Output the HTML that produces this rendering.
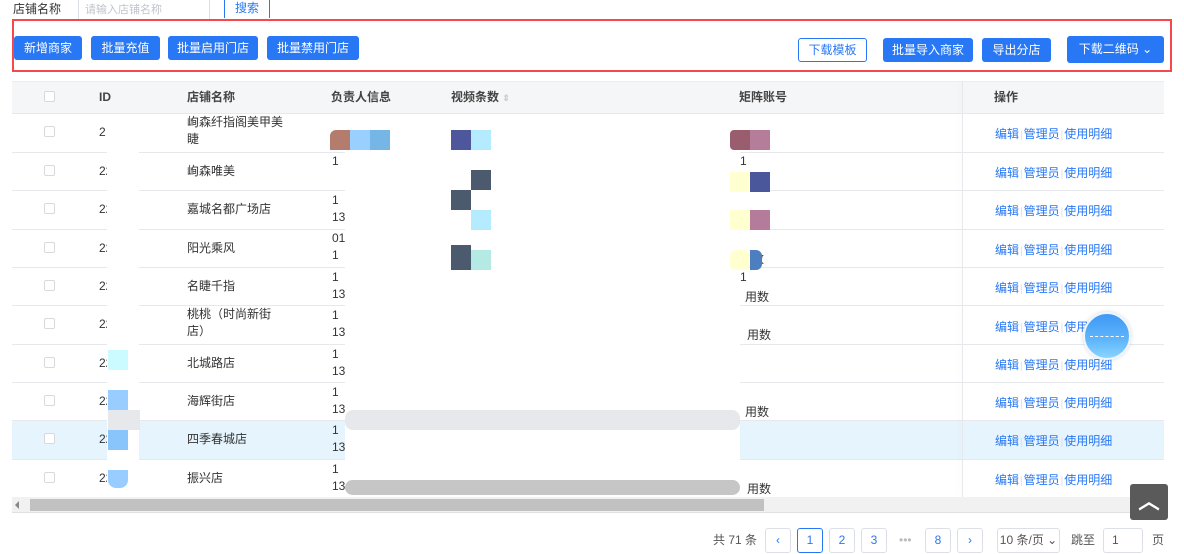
<!DOCTYPE html>
<html><head><meta charset="utf-8"><style>
*{margin:0;padding:0;box-sizing:border-box}
body{width:1184px;height:554px;background:#fff;position:relative;overflow:hidden;font-family:"Liberation Sans","Noto Sans CJK SC",sans-serif;font-size:12px;color:#333}
.a{position:absolute}
.btn{position:absolute;height:24px;line-height:24px;background:#2878f5;color:#fff;border-radius:3px;text-align:center;font-size:12px}
.cb{position:absolute;left:44px;width:11px;height:11px;border:1px solid #d9d9d9;border-radius:2px;background:#fff}
.hl{position:absolute;left:12px;width:1152px;height:1px;background:#e6e8eb}
.t{position:absolute;font-size:12px;color:#333;line-height:20px}
.op{position:absolute;left:995px;color:#2878f5;font-size:12px;white-space:nowrap}
.op i{color:#ddd;font-style:normal;margin:0 1px;font-size:10px}
.pg{position:absolute;top:528px;height:25px;border:1px solid #dcdfe6;border-radius:3px;text-align:center;line-height:23px;color:#2878f5;font-size:12px;background:#fff}
.sw{position:absolute;background:#fff}
</style></head><body>
<div class="t" style="left:13px;top:-1px;color:#333">店铺名称</div>
<div class="a" style="left:78px;top:-2px;width:132px;height:22px;border:1px solid #dcdfe6;border-top:none;color:#c0c4cc;font-size:11px;padding:3px 6px">请输入店铺名称</div>
<div class="a" style="left:224px;top:-2px;width:46px;height:20px;border-left:1px solid #2878f5;border-right:1px solid #2878f5;color:#2878f5;text-align:center;line-height:20px">搜索</div>
<div class="a" style="left:12px;top:19px;width:1160px;height:53px;border:2px solid #f5484c"></div>
<div class="a" style="left:14px;top:44px;width:4px;height:4px;background:#f5484c"></div>
<div class="btn" style="left:14px;top:36px;width:68px">新增商家</div>
<div class="btn" style="left:91px;top:36px;width:69px">批量充值</div>
<div class="btn" style="left:168px;top:36px;width:90px">批量启用门店</div>
<div class="btn" style="left:267px;top:36px;width:92px">批量禁用门店</div>
<div class="btn" style="left:798px;top:38px;width:69px;background:#fff;color:#2878f5;border:1px solid #2878f5;line-height:22px">下载模板</div>
<div class="btn" style="left:883px;top:38px;width:90px">批量导入商家</div>
<div class="btn" style="left:982px;top:38px;width:69px">导出分店</div>
<div class="btn" style="left:1067px;top:36px;width:97px;height:27px;line-height:27px">下载二维码 ⌄</div>

<div class="a" style="left:12px;top:81px;width:1152px;height:32px;background:#f5f6f7;border-top:1px solid #ebedf0"></div>
<div class="cb" style="top:91px"></div>
<div class="t" style="left:99px;top:87px;font-weight:bold;color:#444">ID</div>
<div class="t" style="left:187px;top:87px;font-weight:bold;color:#444">店铺名称</div>
<div class="t" style="left:331px;top:87px;font-weight:bold;color:#444">负责人信息</div>
<div class="t" style="left:451px;top:87px;font-weight:bold;color:#444">视频条数 <span style="color:#ccc;font-size:9px">⇕</span></div>
<div class="t" style="left:739px;top:87px;font-weight:bold;color:#444">矩阵账号</div>
<div class="t" style="left:994px;top:87px;font-weight:bold;color:#444">操作</div>

<div class="a" style="left:12px;top:420px;width:1152px;height:39px;background:#e6f4fd"></div>
<div class="hl" style="top:113px"></div><div class="hl" style="top:152px"></div><div class="hl" style="top:190px"></div><div class="hl" style="top:229px"></div><div class="hl" style="top:267px"></div><div class="hl" style="top:305px"></div><div class="hl" style="top:344px"></div><div class="hl" style="top:382px"></div><div class="hl" style="top:420px"></div><div class="hl" style="top:459px"></div><div class="hl" style="top:497px"></div>

<div class="cb" style="top:126px"></div><div class="cb" style="top:165px"></div><div class="cb" style="top:203px"></div><div class="cb" style="top:242px"></div><div class="cb" style="top:280px"></div><div class="cb" style="top:318px"></div><div class="cb" style="top:357px"></div><div class="cb" style="top:395px"></div><div class="cb" style="top:433px"></div><div class="cb" style="top:472px"></div>

<div class="t" style="left:99px;top:122px">2</div>
<div class="t" style="left:99px;top:161px">22</div><div class="t" style="left:99px;top:199px">22</div><div class="t" style="left:99px;top:238px">22</div><div class="t" style="left:99px;top:276px">22</div><div class="t" style="left:99px;top:314px">22</div><div class="t" style="left:99px;top:353px">22</div><div class="t" style="left:99px;top:391px">22</div><div class="t" style="left:99px;top:429px">22</div><div class="t" style="left:99px;top:468px">22</div>

<div class="t" style="left:187px;top:114px;line-height:17px">峋森纤指阁美甲美<br>睫</div>
<div class="t" style="left:187px;top:161px">峋森唯美</div>
<div class="t" style="left:187px;top:199px">嘉城名都广场店</div>
<div class="t" style="left:187px;top:238px">阳光乘风</div>
<div class="t" style="left:187px;top:276px">名睫千指</div>
<div class="t" style="left:187px;top:306px;line-height:17px">桃桃（时尚新街<br>店）</div>
<div class="t" style="left:187px;top:353px">北城路店</div>
<div class="t" style="left:187px;top:391px">海辉街店</div>
<div class="t" style="left:187px;top:429px">四季春城店</div>
<div class="t" style="left:187px;top:468px">振兴店</div>

<div class="t" style="left:332px;top:153px;line-height:17px">1</div>
<div class="t" style="left:332px;top:192px;line-height:17px">1<br>13</div>
<div class="t" style="left:332px;top:230px;line-height:17px">01<br>1</div>
<div class="t" style="left:332px;top:269px;line-height:17px">1<br>131</div>
<div class="t" style="left:332px;top:307px;line-height:17px">1<br>131</div>
<div class="t" style="left:332px;top:346px;line-height:17px">1<br>13167</div>
<div class="t" style="left:332px;top:384px;line-height:17px">1<br>1316</div>
<div class="t" style="left:332px;top:422px;line-height:17px">1<br>1316</div>
<div class="t" style="left:332px;top:461px;line-height:17px">1<br>131</div>
<div class="t" style="left:451px;top:153px;line-height:17px">65</div>
<div class="t" style="left:451px;top:230px;line-height:17px">64</div>
<div class="t" style="left:451px;top:384px;line-height:17px">8</div>
<div class="t" style="left:451px;top:461px;line-height:17px">160</div>
<div class="t" style="left:740px;top:153px;line-height:17px">1</div>
<div class="t" style="left:740px;top:269px;line-height:17px">1</div>
<div class="t" style="left:752px;top:249px">数</div>
<div class="t" style="left:745px;top:287px">用数</div>
<div class="t" style="left:747px;top:325px">用数</div>
<div class="t" style="left:745px;top:402px">用数</div>
<div class="t" style="left:747px;top:479px">用数</div>

<!-- blurs -->
<div class="sw" style="left:345px;top:116px;width:395px;height:380px;border-radius:20px"></div>
<div class="sw" style="left:107px;top:114px;width:32px;height:384px"></div>
<div class="a" style="left:345px;top:410px;width:395px;height:20px;background:#e6e8eb;border-radius:8px"></div>
<div class="a" style="left:345px;top:480px;width:395px;height:15px;background:#c6c6c6;border-radius:8px"></div>
<div class="a" style="left:108px;top:410px;width:32px;height:20px;background:#e6e8eb"></div>
<div class="a" style="left:108px;top:350px;width:20px;height:20px;background:#ccfbff"></div>
<div class="a" style="left:108px;top:390px;width:20px;height:20px;background:#99ccff"></div>
<div class="a" style="left:108px;top:430px;width:20px;height:20px;background:#89c4fa"></div>
<div class="a" style="left:108px;top:470px;width:20px;height:18px;background:#99ccff;border-radius:0 0 8px 8px"></div>
<div class="a" style="left:330px;top:130px;width:20px;height:20px;background:#b47c6c;border-radius:6px 0 0 0"></div>
<div class="a" style="left:350px;top:130px;width:20px;height:20px;background:#99d0ff"></div>
<div class="a" style="left:370px;top:130px;width:20px;height:20px;background:#76b6e6"></div>
<div class="a" style="left:451px;top:130px;width:20px;height:20px;background:#4e579b"></div>
<div class="a" style="left:471px;top:130px;width:20px;height:20px;background:#b5ebff"></div>
<div class="a" style="left:471px;top:170px;width:20px;height:20px;background:#4c5a6e"></div>
<div class="a" style="left:451px;top:190px;width:20px;height:20px;background:#4c5a6e"></div>
<div class="a" style="left:471px;top:210px;width:20px;height:20px;background:#b5ebff"></div>
<div class="a" style="left:451px;top:245px;width:20px;height:25px;background:#4c5a6e"></div>
<div class="a" style="left:471px;top:250px;width:20px;height:20px;background:#b5e9e3"></div>
<div class="a" style="left:730px;top:130px;width:20px;height:20px;background:#9a5d6e;border-radius:4px 0 0 4px"></div>
<div class="a" style="left:750px;top:130px;width:20px;height:20px;background:#b67d9a"></div>
<div class="a" style="left:730px;top:172px;width:20px;height:20px;background:#ffffd0"></div>
<div class="a" style="left:750px;top:172px;width:20px;height:20px;background:#4b579b"></div>
<div class="a" style="left:730px;top:210px;width:20px;height:20px;background:#ffffd0"></div>
<div class="a" style="left:750px;top:210px;width:20px;height:20px;background:#b47c9a"></div>
<div class="a" style="left:730px;top:250px;width:20px;height:20px;background:#ffffd0;border-radius:6px"></div>
<div class="a" style="left:750px;top:250px;width:12px;height:20px;background:#4d7fc0;border-radius:0 6px 6px 0"></div>

<!-- fixed right column -->
<div class="a" style="left:962px;top:81px;width:1px;height:416px;background:#e6e8eb;box-shadow:-3px 0 6px rgba(0,0,0,.06)"></div>
<div class="op" style="top:125px">编辑<i>|</i>管理员<i>|</i>使用明细</div>
<div class="op" style="top:164px">编辑<i>|</i>管理员<i>|</i>使用明细</div>
<div class="op" style="top:202px">编辑<i>|</i>管理员<i>|</i>使用明细</div>
<div class="op" style="top:241px">编辑<i>|</i>管理员<i>|</i>使用明细</div>
<div class="op" style="top:279px">编辑<i>|</i>管理员<i>|</i>使用明细</div>
<div class="op" style="top:318px">编辑<i>|</i>管理员<i>|</i>使用明细</div>
<div class="op" style="top:356px">编辑<i>|</i>管理员<i>|</i>使用明细</div>
<div class="op" style="top:394px">编辑<i>|</i>管理员<i>|</i>使用明细</div>
<div class="op" style="top:432px">编辑<i>|</i>管理员<i>|</i>使用明细</div>
<div class="op" style="top:471px">编辑<i>|</i>管理员<i>|</i>使用明细</div>

<div class="a" style="left:1083px;top:312px;width:48px;height:48px;border-radius:50%;background:linear-gradient(#3f98f5,#5fb6fb 60%,#8ad4ff);border:2px solid #eef5fd;box-shadow:0 0 4px rgba(0,0,0,.15)"></div>
<div class="a" style="left:1090px;top:336px;width:34px;height:1px;border-top:1px dashed #fff"></div>

<!-- scrollbar -->
<div class="a" style="left:12px;top:497px;width:1152px;height:16px;background:#f1f1f1;border-bottom:1px solid #e0e0e0"></div>
<div class="a" style="left:30px;top:499px;width:734px;height:12px;background:#c1c1c1"></div>
<div class="a" style="left:15px;top:501px;width:0;height:0;border:4px solid transparent;border-right-color:#888;border-left:none"></div>
<div class="a" style="left:1130px;top:484px;width:38px;height:36px;background:#5a5a5a;border-radius:3px;color:#fff;text-align:center;font-size:22px;line-height:36px;font-weight:bold">︿</div>

<!-- pagination -->
<div class="t" style="left:713px;top:530px;color:#555">共 71 条</div>
<div class="pg" style="left:765px;width:26px">‹</div>
<div class="pg" style="left:797px;width:26px;border-color:#2878f5">1</div>
<div class="pg" style="left:829px;width:26px">2</div>
<div class="pg" style="left:861px;width:26px">3</div>
<div class="t" style="left:899px;top:530px;color:#bbb">•••</div>
<div class="pg" style="left:925px;width:26px">8</div>
<div class="pg" style="left:957px;width:26px">›</div>
<div class="pg" style="left:997px;width:63px;color:#555">10 条/页 ⌄</div>
<div class="t" style="left:1071px;top:530px;color:#555">跳至</div>
<div class="pg" style="left:1103px;width:40px;color:#555;text-align:left;padding-left:8px">1</div>
<div class="t" style="left:1152px;top:530px;color:#555">页</div>
</body></html>
